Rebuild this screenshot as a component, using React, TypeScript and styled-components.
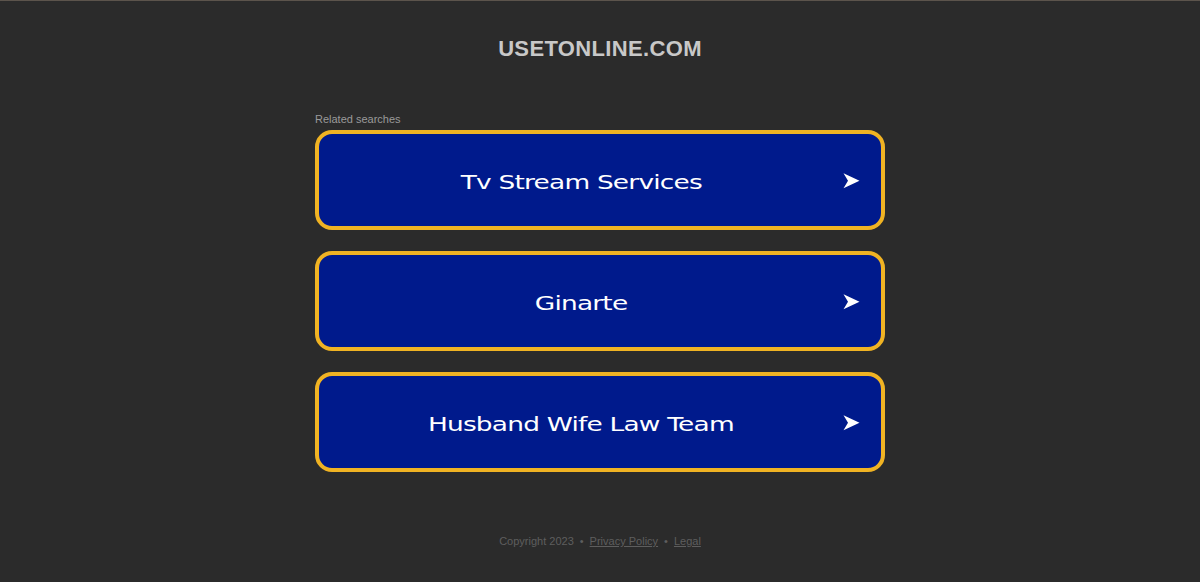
import React from 'react';
import styled, { createGlobalStyle } from 'styled-components';

const GlobalStyle = createGlobalStyle`
    html, body {
        margin: 0;
        padding: 0;
        background: #2b2b2b;
    }
    body {
        font-family: Arial, 'Liberation Sans', sans-serif;
    }
`;

const Page = styled.div`
    min-height: 582px;
    box-sizing: border-box;
    border-top: 1px solid #5c544c;
    display: flex;
    flex-direction: column;
    align-items: center;
`;

const Title = styled.h1`
    margin: 35px 0 0;
    font-family: 'Liberation Sans', Arial, sans-serif;
    font-size: 22px;
    font-weight: bold;
    color: #c8c8c8;
    letter-spacing: 0.35px;
`;

const Searches = styled.div`
    width: 570px;
    margin-top: 51px;
    display: flex;
    flex-direction: column;
`;

const Label = styled.div`
    font-family: 'Liberation Sans', Arial, sans-serif;
    font-size: 11px;
    color: #9a9a9a;
    margin-bottom: 5px;
`;

const List = styled.div`
    display: flex;
    flex-direction: column;
    gap: 21px;
`;

const SearchLink = styled.a`
    position: relative;
    height: 100px;
    box-sizing: border-box;
    border: 4px solid #f0b323;
    border-radius: 17px;
    background: #001a8c;
    padding: 3px 38px 0 0;
    display: flex;
    align-items: center;
    justify-content: center;
    text-decoration: none;
    color: #fff;
    cursor: pointer;
`;

const LinkText = styled.span`
    font-family: 'DejaVu Sans', sans-serif;
    font-size: 20px;
    letter-spacing: -0.6px;
    transform: scaleX(1.32);
`;

const Arrow = styled.svg`
    position: absolute;
    right: 21px;
    top: 50%;
    width: 17px;
    height: 16px;
    transform: translateY(-45%);
`;

const Footer = styled.div`
    margin-top: 63px;
    font-family: 'Liberation Sans', Arial, sans-serif;
    font-size: 11px;
    color: #5e5e5e;
    display: flex;
    gap: 6px;
    a {
        color: #5e5e5e;
        text-decoration: underline;
    }
`;

const items = ['Tv Stream Services', 'Ginarte', 'Husband Wife Law Team'];

export default function App() {
    return (
        <>
            <GlobalStyle />
            <Page>
                <Title>USETONLINE.COM</Title>
                <Searches>
                    <Label>Related searches</Label>
                    <List>
                        {items.map(item => (
                            <SearchLink key={item}>
                                <LinkText>{item}</LinkText>
                                <Arrow viewBox="0 0 17 16">
                                    <path d="M0.5 0.5 L16.5 8 L0.5 15.5 L5 8 Z" fill="#fff" />
                                </Arrow>
                            </SearchLink>
                        ))}
                    </List>
                </Searches>
                <Footer>
                    <span>Copyright 2023</span>
                    <span>•</span>
                    <a>Privacy Policy</a>
                    <span>•</span>
                    <a>Legal</a>
                </Footer>
            </Page>
        </>
    );
}
